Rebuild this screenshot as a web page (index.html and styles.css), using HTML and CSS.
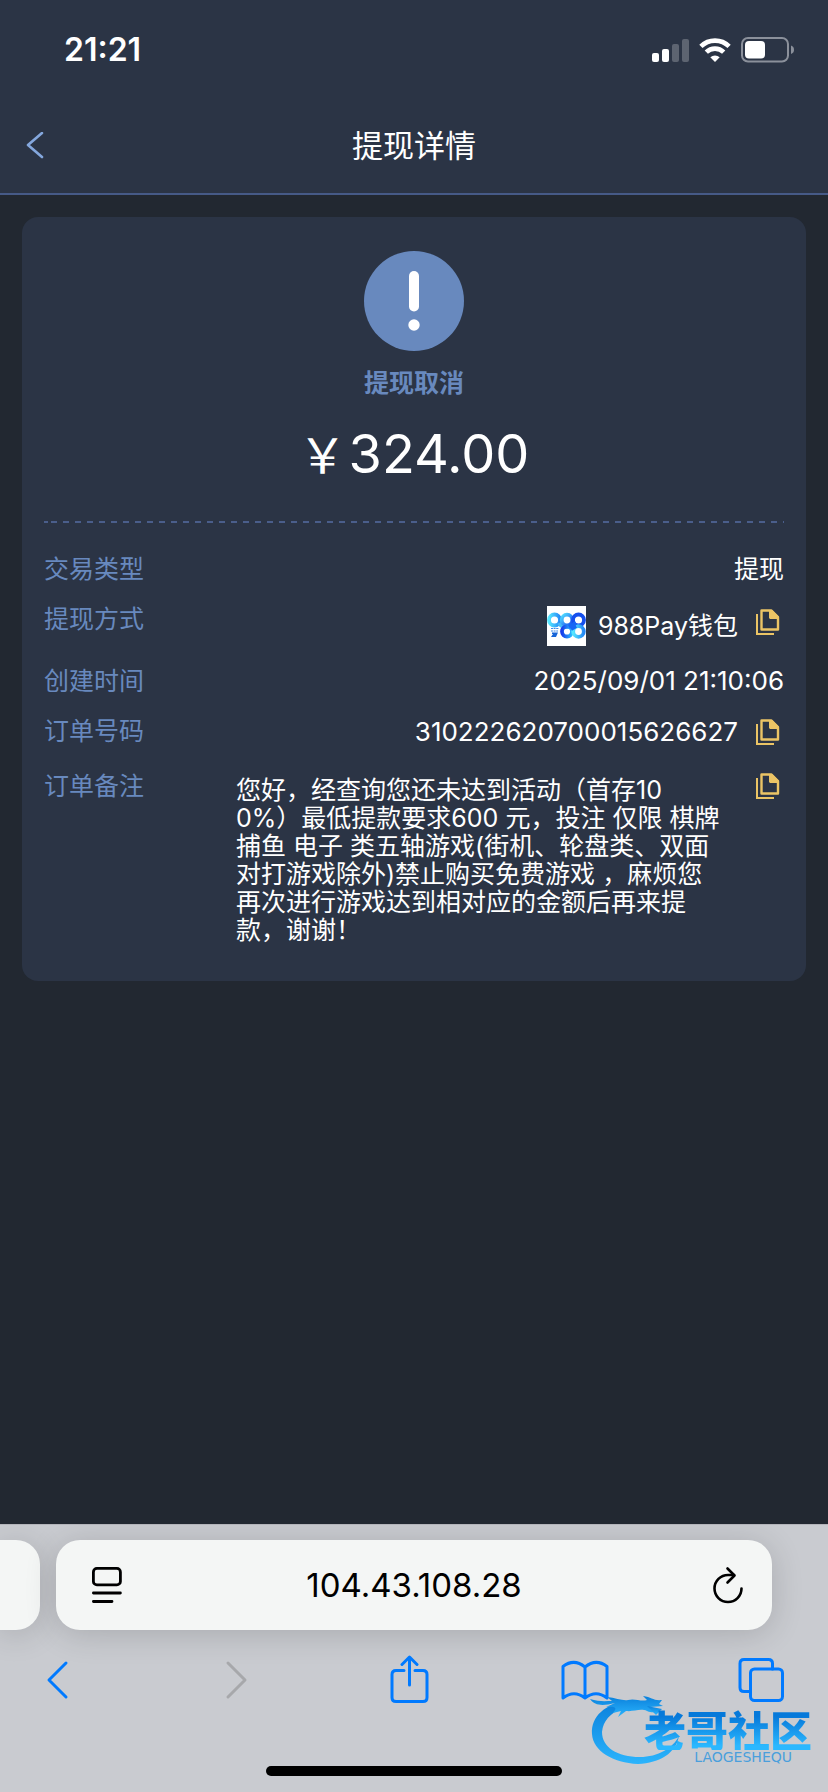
FILE: index.html
```html
<!DOCTYPE html>
<html lang="zh-CN">
<head>
<meta charset="utf-8">
<meta name="viewport" content="width=device-width, initial-scale=1">
<title>提现详情</title>
<link rel="stylesheet" href="styles.css">
</head>
<body>
<svg class="defs" width="0" height="0" aria-hidden="true">
  <symbol id="copy" viewBox="0 0 24 26">
    <path d="M1 5V25H18" fill="none" stroke="currentColor" stroke-width="2"/>
    <path d="M5.500 1.500H15.500L22 8V20.500H5.500Z" fill="none" stroke="currentColor" stroke-width="2.400" stroke-linejoin="round"/>
    <path d="M13 1H16L22.500 7.500V10H14L13 9Z" fill="currentColor"/>
  </symbol>
</svg>
<header class="top">
  <div class="status">
    <time class="clock">21:21</time>
    <div class="indicators">
      <svg width="37" height="24" viewBox="0 0 37 24" fill="#fff" aria-label="信号">
        <rect x="0" y="15" width="7" height="9" rx="2"/><rect x="10" y="11" width="7" height="13" rx="2"/>
        <rect x="20" y="6" width="7" height="18" rx="2" opacity=".24"/><rect x="30" y="1" width="7" height="23" rx="2" opacity=".24"/>
      </svg>
      <svg width="32" height="24" viewBox="0 0 32 24" aria-label="无线网络">
        <path d="M1.900 8.400A20 20 0 0 1 30.100 8.400" fill="none" stroke="#fff" stroke-width="4.600"/>
        <path d="M7.300 14.200A12.300 12.300 0 0 1 24.700 14.200" fill="none" stroke="#fff" stroke-width="4.600"/>
        <path d="M16 24L11.300 19.200A7 7 0 0 1 20.700 19.200Z" fill="#fff"/>
      </svg>
      <svg width="54" height="26" viewBox="0 0 54 26" aria-label="电池">
        <rect x="1" y="1" width="46" height="23.500" rx="6" fill="none" stroke="#8b909b" stroke-width="2"/>
        <rect x="4" y="4" width="20" height="17.500" rx="4" fill="#fff"/>
        <path d="M50 8.500Q53 9.500 53 12.700T50 17Z" fill="#8b909b"/>
      </svg>
    </div>
  </div>
  <nav class="nav">
    <button class="back" type="button" aria-label="返回">
      <svg width="18" height="28" viewBox="0 0 18 28"><path d="M16 1L2 13L16 25" fill="none" stroke="#84a7dd" stroke-width="2.600" stroke-linecap="round" stroke-linejoin="round"/></svg>
    </button>
    <h1 class="title">提现详情</h1>
  </nav>
</header>

<main class="page">
  <section class="card">
    <div class="summary">
      <svg width="100" height="100" viewBox="0 0 100 100" aria-hidden="true">
        <circle cx="50" cy="50" r="50" fill="#6889be"/>
        <path d="M50 25V55.500" stroke="#fff" stroke-width="10" stroke-linecap="round"/>
        <circle cx="50" cy="74" r="5.700" fill="#fff"/>
      </svg>
      <p class="state">提现取消</p>
      <p class="amount"><span class="currency">￥</span><span>324.00</span></p>
    </div>
    <svg class="divider" width="100%" height="2" aria-hidden="true"><path d="M0 1H2000" stroke="#4a5e8b" stroke-width="2" stroke-dasharray="6" stroke-dashoffset="-7"/><path d="M0 1H4" stroke="#4a5e8b" stroke-width="2"/></svg>
    <dl class="details">
      <div class="row"><dt>交易类型</dt><dd>提现</dd></div>
      <div class="row">
        <dt>提现方式</dt>
        <dd class="method">
          <svg width="39" height="40" viewBox="0 0 39 40" aria-hidden="true">
            <defs>
              <linearGradient id="ga" x2="1"><stop stop-color="#56e6ff"/><stop offset="1" stop-color="#2387f6"/></linearGradient>
              <linearGradient id="gb" x2="1"><stop stop-color="#173cea"/><stop offset="1" stop-color="#2bbcff"/></linearGradient>
              <linearGradient id="gc" x2="1" y2="1"><stop stop-color="#51dfff"/><stop offset="1" stop-color="#1948ef"/></linearGradient>
            </defs>
            <path d="M0 0H39V40H0Z" fill="#fff"/>
            <g fill="none" stroke-width="3.800">
              <circle cx="7.500" cy="14" r="5.500" stroke="url(#ga)"/>
              <path d="M12 17Q14 21 18 21Q23 21 26 17" stroke="#45b9f8"/>
              <circle cx="20" cy="14" r="5.300" stroke="url(#gc)"/>
              <circle cx="31.500" cy="14" r="5.500" stroke="#154fee"/>
              <circle cx="20" cy="25.500" r="5" stroke="url(#gb)"/>
              <circle cx="31.500" cy="25.500" r="5.300" stroke="url(#ga)"/>
              <path d="M22 21L29 17M24 23L29 20" stroke="#1766f4"/>
            </g>
            <path d="M4 22.500H12M4 25H11" stroke="#428ce7" stroke-width="1.200" stroke-dasharray="2 .6"/>
            <path d="M5 26.500H11L9 31H4L6 28H5Z" fill="#1765d8"/>
          </svg>
          <span>988Pay钱包</span>
          <button class="copy" type="button" aria-label="复制提现方式"><svg width="24" height="26"><use href="#copy"/></svg></button>
        </dd>
      </div>
      <div class="row"><dt>创建时间</dt><dd class="number">2025/09/01 21:10:06</dd></div>
      <div class="row">
        <dt>订单号码</dt>
        <dd class="order number"><span>310222620700015626627</span><button class="copy" type="button" aria-label="复制订单号码"><svg width="24" height="26"><use href="#copy"/></svg></button></dd>
      </div>
      <div class="row">
        <dt>订单备注</dt>
        <dd class="remark">
          <p class="note">您好，经查询您还未达到活动（首存10<br>0%）最低提款要求600 元，投注 仅限 棋牌<br>捕鱼 电子 类五轴游戏(街机、轮盘类、双面<br>对打游戏除外)禁止购买免费游戏 ，麻烦您<br>再次进行游戏达到相对应的金额后再来提<br>款，谢谢！</p>
          <button class="copy" type="button" aria-label="复制订单备注"><svg width="24" height="26"><use href="#copy"/></svg></button>
        </dd>
      </div>
    </dl>
  </section>
</main>

<footer class="browser">
  <div class="tabs">
    <div class="tab-prev"></div>
    <div class="address">
      <button type="button" aria-label="页面菜单">
        <svg width="32" height="38" viewBox="0 0 32 38" fill="none" stroke="#000" stroke-width="2.800" stroke-linecap="round"><rect x="2.400" y="2.400" width="27" height="16.500" rx="3.500"/><path d="M2.400 27H29.400M2.400 35.500H21"/></svg>
      </button>
      <span class="host">104.43.108.28</span>
      <button type="button" aria-label="重新载入">
        <svg width="32" height="38" viewBox="0 0 32 38" fill="none" stroke="#000" stroke-width="2.600" stroke-linecap="round" stroke-linejoin="round"><path d="M29.500 22.500A13.500 13.500 0 1 1 16 9H22"/><path d="M15.500 2.500L22.500 9.500L15.500 16.500"/></svg>
      </button>
    </div>
  </div>
  <nav class="tools">
    <button type="button" aria-label="后退"><svg width="46" height="50" viewBox="0 0 46 50"><path d="M32 8L15 25L32 42"/></svg></button>
    <button type="button" aria-label="前进" disabled><svg width="46" height="50" viewBox="0 0 46 50"><path d="M19 8L36 25L19 42"/></svg></button>
    <button type="button" aria-label="分享"><svg width="46" height="50" viewBox="-2 0 46 50"><path d="M18 15.500H10Q6 15.500 6 19.500V42.500Q6 46.500 10 46.500H37Q41 46.500 41 42.500V19.500Q41 15.500 37 15.500H29M23.500 30V2.500M16 9.500L23.500 2L31 9.500"/></svg></button>
    <button type="button" aria-label="书签"><svg width="50" height="50" viewBox="0 0 50 50"><path d="M26 12Q15 3 4 11.500V43Q15 34.500 26 43Q37 34.500 48 43V11.500Q37 3 26 12V43"/></svg></button>
    <button type="button" aria-label="标签页"><svg width="46" height="50" viewBox="0 0 46 50"><rect x="12.500" y="14" width="32" height="31.500" rx="4"/><path d="M12.500 36.500H6Q2 36.500 2 32.500V8.500Q2 4.500 6 4.500H30.500Q34.500 4.500 34.500 8.500V14"/></svg></button>
  </nav>
  <div class="home-bar"></div>
  <div class="mark">
    <svg class="dragon" width="92" height="76" viewBox="0 0 92 76" aria-hidden="true">
      <defs><linearGradient id="dg" x2="0" y2="1"><stop stop-color="#0a80dc"/><stop offset="1" stop-color="#2bb4fc"/></linearGradient></defs>
      <g fill="url(#dg)">
        <path d="M38 11C15 14 1 26 2 44C3 61 23 73 48 74C70 73 86 63 89 46C83 58 68 67 50 67C27 67 12 57 12 42C13 31 20 23 33 18Z"/>
        <path d="M0 9C9 12 16 11 22 11L17 7C26 8 33 11 38 10C45 8 51 12 57 10L53 6C62 7 63 11 72 10L69 14L73 16L60 17C64 20 70 18 70 22C64 21 64 24 57 21C50 18 44 22 36 21L28 27L31 21L23 23C27 18 27 16 16 17L25 13C13 16 5 16 0 9Z"/>
        <path d="M57 16L72 19L66 25Z"/>
      </g>
    </svg>
    <div class="mark-text"><span class="mark-name">老哥社区</span><span class="mark-latin">LAOGESHEQU</span></div>
  </div>
</footer>
</body>
</html>
```

FILE: styles.css
```css
* { box-sizing: border-box; }

body {
  margin: 0;
  min-height: 100vh;
  display: flex;
  flex-direction: column;
  background: #222831;
  color: #fff;
  font-family: Inter, "Noto Sans CJK SC", sans-serif;
  font-size: 25px;
  line-height: 30px;
}

h1, p, dl, dd { margin: 0; }

svg { display: block; flex: none; }

.defs { position: absolute; }

button {
  display: block;
  padding: 0;
  border: 0;
  background: none;
  color: inherit;
}

.top {
  background: #2b3445;
  border-bottom: 2px solid #465a87;
}

.status {
  height: 99px;
  padding: 0 33px 0 64px;
  display: flex;
  align-items: center;
  justify-content: space-between;
}

.clock { font-size: 32px; font-weight: 600; }

.indicators { display: flex; align-items: center; gap: 10px; }

.nav {
  height: 94px;
  padding: 0 26px;
  display: grid;
  grid-template-columns: 1fr auto 1fr;
  align-items: center;
}

.back { justify-self: start; }

.title { font-size: 31px; font-weight: 400; line-height: 40px; }

.page { flex: 1; padding: 22px; }

.card {
  padding: 34px 22px 37px;
  border-radius: 16px;
  background: #2b3445;
}

.summary {
  display: flex;
  flex-direction: column;
  align-items: center;
}

.state {
  margin-top: 17px;
  color: #6889be;
  font-weight: 700;
}

.amount {
  margin-top: 24px;
  display: flex;
  align-items: baseline;
  gap: 2px;
  font-size: 54px;
  line-height: 64px;
}

.currency { font-size: 48px; }

.divider { margin-top: 33px; }

.details {
  margin-top: 31px;
  display: flex;
  flex-direction: column;
  gap: 20px;
}

.row {
  display: flex;
  justify-content: space-between;
  align-items: flex-start;
}

.row dt { color: #6889be; }

.number { font-size: 26px; }

.method, .order { display: flex; align-items: center; }

.method { padding-top: 2px; gap: 12px; }

.order { height: 32px; margin-bottom: 3px; }

.copy { padding: 0 4px; margin-left: 14px; color: #ebc465; }

.method .copy { margin: 0 0 8px 2px; }

.remark { display: flex; align-items: flex-start; }

.remark .copy { padding-top: 2px; }

.note {
  width: 502px;
  padding-top: 5px;
  line-height: 28px;
  white-space: nowrap;
}

.browser {
  position: relative;
  overflow: hidden;
  padding: 15px 0 16px;
  border-top: 1px solid #b3b4ba;
  background: #c9cbd0;
}

.tabs { display: flex; gap: 16px; padding-right: 56px; }

.tab-prev, .address {
  height: 90px;
  background: #f4f6f5;
  box-shadow: 0 4px 32px rgba(0, 0, 0, .16);
}

.tab-prev { width: 40px; border-radius: 0 24px 24px 0; }

.address {
  flex: 1;
  padding: 0 28px;
  display: flex;
  align-items: center;
  justify-content: space-between;
  border-radius: 24px;
  color: #000;
}

.address button { padding-left: 7px; }

.host { font-size: 33px; line-height: 40px; }

.tools {
  padding: 25px 44px 0 34px;
  display: flex;
  justify-content: space-between;
}

.tools button { color: #007aff; }

.tools button:disabled { color: #a7a8ab; }

.tools svg {
  fill: none;
  stroke: currentColor;
  stroke-width: 3;
  stroke-linecap: round;
  stroke-linejoin: round;
}

.home-bar {
  width: 296px;
  height: 10px;
  margin: 61px auto 0;
  border-radius: 5px;
  background: #000;
}

.mark {
  position: absolute;
  right: 16px;
  bottom: 26px;
  display: flex;
  align-items: flex-end;
}

.dragon { margin-right: -38px; }

.mark-text {
  position: relative;
  padding-bottom: 2px;
  display: flex;
  flex-direction: column;
  align-items: flex-end;
}

.mark-name {
  font-family: "Noto Sans CJK SC", sans-serif;
  font-size: 42px;
  font-weight: 900;
  line-height: 42px;
  background: linear-gradient(#0679da 20%, #2bb8ff 90%);
  background-clip: text;
  -webkit-background-clip: text;
  color: transparent;
}

.mark-latin {
  padding-right: 20px;
  color: #4a9fdc;
  font-family: "DejaVu Sans", sans-serif;
  font-size: 14px;
  line-height: 14px;
}
```
